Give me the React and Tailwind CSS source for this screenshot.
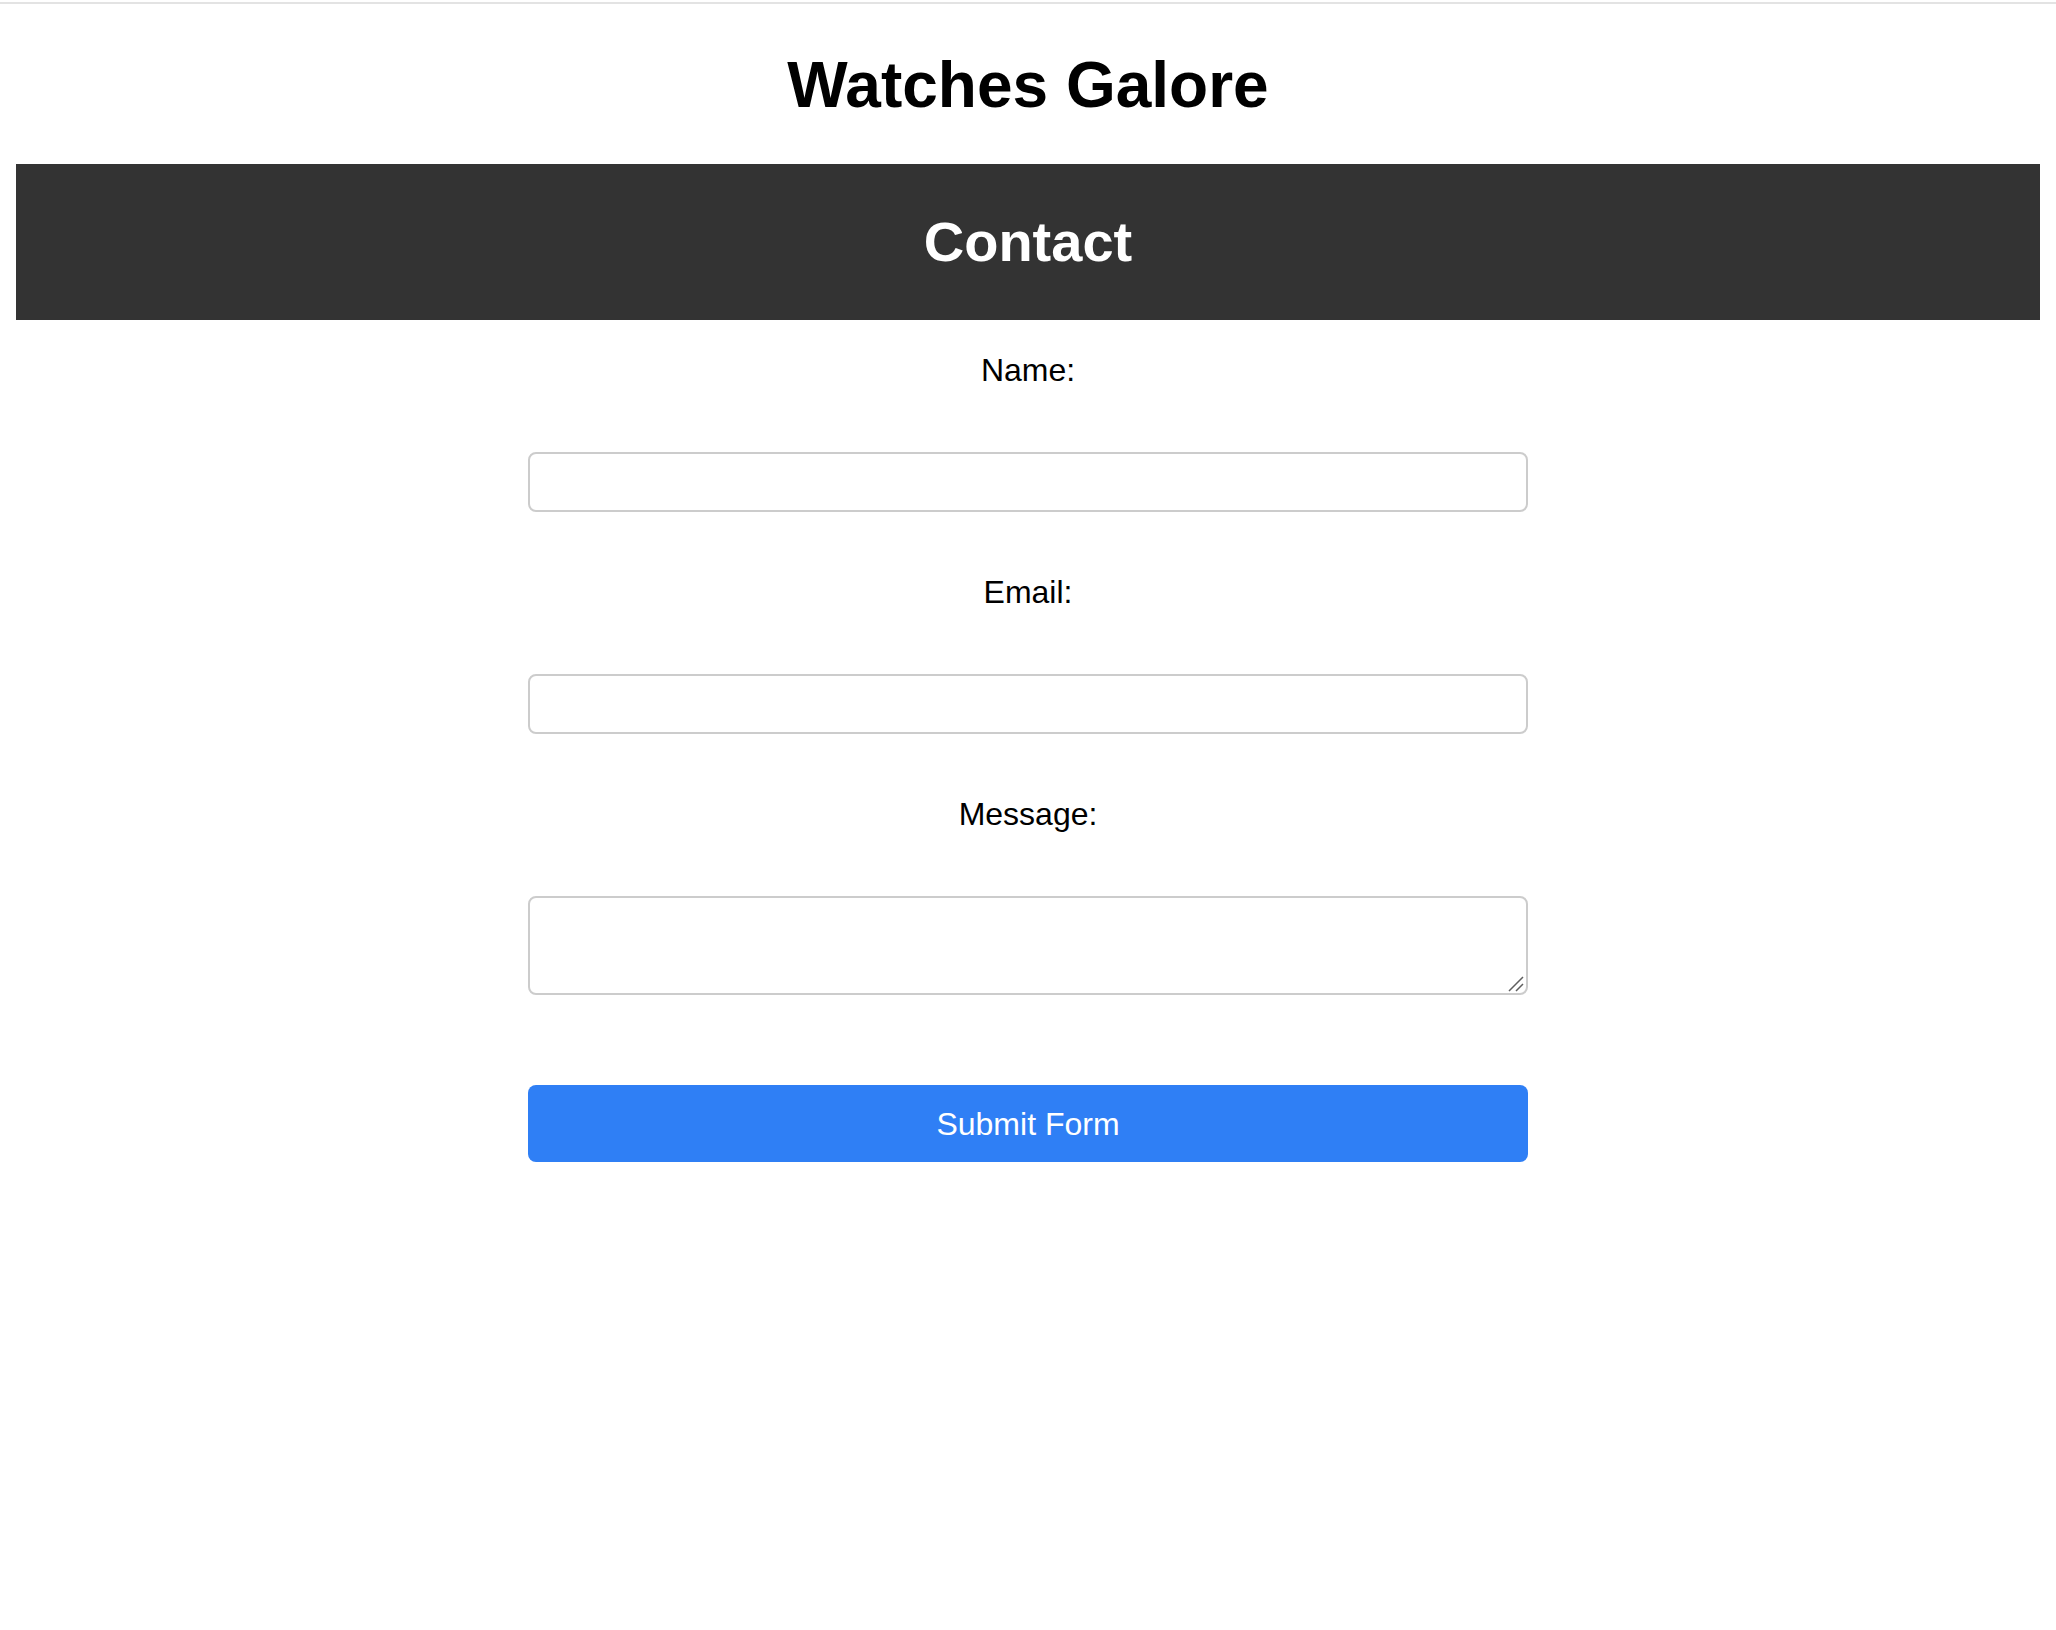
import { useState } from 'react';

export default function App() {
    const [form, setForm] = useState({ name: '', email: '', message: '' });

    const handleChange = (e) => {
        setForm({ ...form, [e.target.name]: e.target.value });
    };

    const handleSubmit = (e) => {
        e.preventDefault();
    };

    return (
        <div className="min-h-[1630px] bg-white font-['Liberation_Sans',Arial,sans-serif] text-black">
            <div className="mt-[2px] h-[2px] bg-[#e3e3e3]" />

            <h1 className="mt-[43.5px] text-center text-[64px] font-bold leading-[74px]">Watches Galore</h1>

            <div className="mx-4 mt-[42.5px] bg-[#333333] py-[46px]">
                <h2 className="text-center text-[56px] font-bold leading-[64px] text-white">Contact</h2>
            </div>

            <form onSubmit={handleSubmit} className="mx-auto flex w-[1000px] flex-col pt-[25.6px]">
                <label htmlFor="name" className="block text-center text-[32px] leading-[48px]">
                    Name:
                </label>
                <input
                    id="name"
                    name="name"
                    type="text"
                    value={form.name}
                    onChange={handleChange}
                    className="mt-[58px] block h-[60px] w-full rounded-[8px] border-2 border-[#cccccc] px-4 text-[26px] outline-none"
                />

                <label htmlFor="email" className="mt-[56px] block text-center text-[32px] leading-[48px]">
                    Email:
                </label>
                <input
                    id="email"
                    name="email"
                    type="email"
                    value={form.email}
                    onChange={handleChange}
                    className="mt-[58px] block h-[60px] w-full rounded-[8px] border-2 border-[#cccccc] px-4 text-[26px] outline-none"
                />

                <label htmlFor="message" className="mt-[56px] block text-center text-[32px] leading-[48px]">
                    Message:
                </label>
                <div className="relative mt-[58px]">
                    <textarea
                        id="message"
                        name="message"
                        value={form.message}
                        onChange={handleChange}
                        className="block h-[99px] w-full resize-none rounded-[8px] border-2 border-[#cccccc] px-4 py-2 text-[26px] outline-none"
                    />
                    {/* resize grip */}
                    <svg
                        className="pointer-events-none absolute bottom-[3px] right-[4px]"
                        width="16"
                        height="16"
                        viewBox="0 0 16 16"
                    >
                        <path d="M1 15 L15 1 M8 15 L15 8" stroke="#5f5f5f" strokeWidth="1.5" fill="none" />
                    </svg>
                </div>

                <button
                    type="submit"
                    className="mt-[90.5px] h-[77px] w-full rounded-[8px] bg-[#2f7ff5] text-[32px] text-white"
                >
                    Submit Form
                </button>
            </form>
        </div>
    );
}
